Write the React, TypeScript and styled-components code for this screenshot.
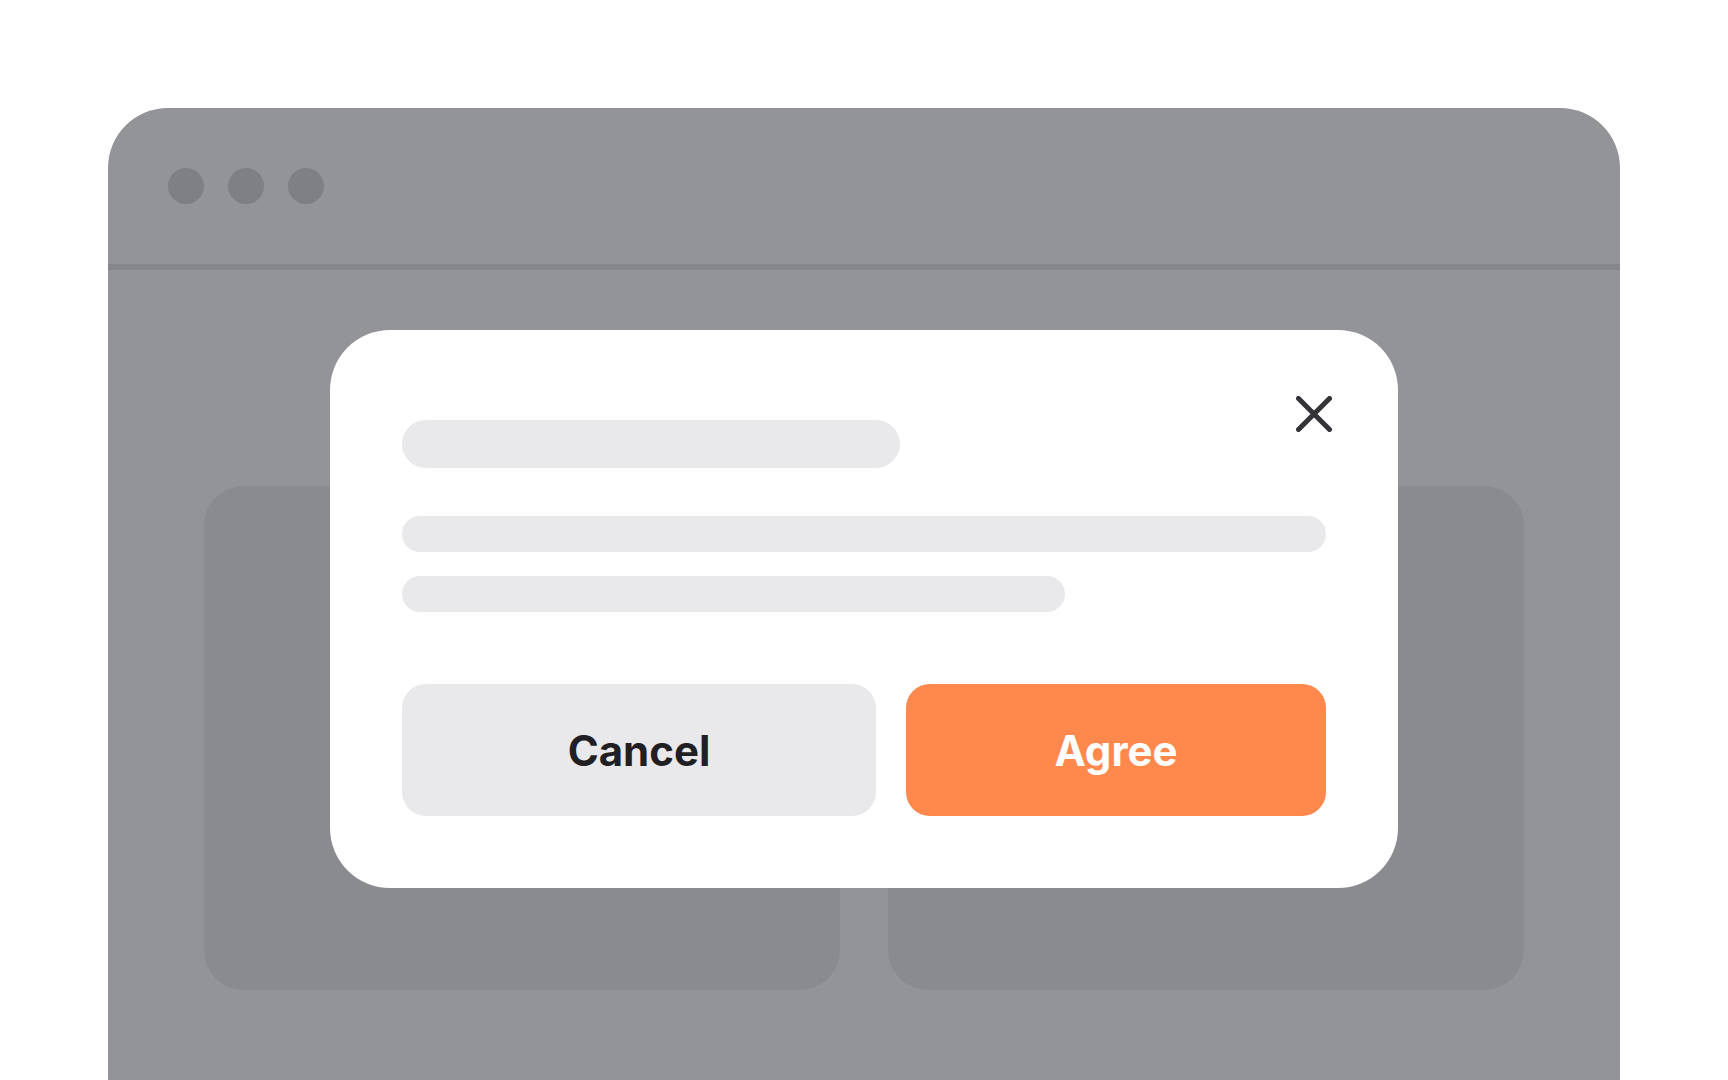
import React from "react";
import styled, { createGlobalStyle } from "styled-components";

const GlobalStyle = createGlobalStyle`
  html, body {
    margin: 0;
    padding: 0;
    background: #ffffff;
    overflow: hidden;
    font-family: Inter, "Liberation Sans", sans-serif;
  }
`;

const Page = styled.div`
  width: 1728px;
  height: 1080px;
  padding: 108px 108px 0;
  box-sizing: border-box;
  overflow: hidden;
`;

const BrowserWindow = styled.div`
  position: relative;
  height: 1002px;
  background: #939498;
  border-radius: 60px 60px 0 0;
  display: flex;
  flex-direction: column;
`;

const TitleBar = styled.div`
  height: 156px;
  padding-left: 60px;
  display: flex;
  align-items: center;
  gap: 24px;
  border-bottom: 6px solid #86878b;
`;

const Dot = styled.span`
  width: 36px;
  height: 36px;
  border-radius: 50%;
  background: #7f8085;
`;

const WindowBody = styled.div`
  padding: 216px 96px 0;
  display: grid;
  grid-template-columns: 1fr 1fr;
  gap: 48px;
`;

const Card = styled.div`
  height: 504px;
  border-radius: 40px;
  background: #8a8b8f;
`;

// overlay layer that centers the dialog over the window
const Overlay = styled.div`
  position: absolute;
  inset: 0;
  display: flex;
  align-items: center;
  justify-content: center;
`;

const Modal = styled.div`
  position: relative;
  width: 1068px;
  box-sizing: border-box;
  padding: 90px 72px 72px;
  background: #ffffff;
  border-radius: 60px;
  display: flex;
  flex-direction: column;
`;

const CloseButton = styled.button`
  position: absolute;
  top: 66px;
  right: 66px;
  width: 36px;
  height: 36px;
  padding: 0;
  border: none;
  background: none;
  cursor: pointer;
  display: flex;
`;

const Skeleton = styled.div<{ w: number; h: number }>`
  width: ${p => p.w}px;
  height: ${p => p.h}px;
  border-radius: ${p => p.h / 2}px;
  background: #e9e9eb;
`;

const Lines = styled.div`
  display: flex;
  flex-direction: column;
  gap: 24px;
  margin-top: 48px;
`;

const Actions = styled.div`
  margin-top: 72px;
  display: flex;
  gap: 30px;
`;

const ActionButton = styled.button<{ primary?: boolean; w: number }>`
  width: ${p => p.w}px;
  height: 132px;
  border: none;
  border-radius: 24px;
  background: ${p => (p.primary ? "#ff884d" : "#e9e9eb")};
  color: ${p => (p.primary ? "#ffffff" : "#1f1f24")};
  font-family: Inter, "Liberation Sans", sans-serif;
  font-weight: 700;
  font-size: 42px;
  cursor: pointer;
`;

const CloseIcon = () => (
  <svg width="36" height="36" viewBox="0 0 36 36" fill="none">
    <path d="M2.5 2.5L33.5 33.5M33.5 2.5L2.5 33.5" stroke="#333338" strokeWidth="5" strokeLinecap="round" />
  </svg>
);

const App: React.FC = () => {
  return (
    <>
      <GlobalStyle />
      <Page>
        <BrowserWindow>
          <TitleBar>
            <Dot />
            <Dot />
            <Dot />
          </TitleBar>
          <WindowBody>
            <Card />
            <Card />
          </WindowBody>

          <Overlay>
            <Modal>
              <CloseButton aria-label="Close">
                <CloseIcon />
              </CloseButton>
              <Skeleton w={498} h={48} />
              <Lines>
                <Skeleton w={924} h={36} />
                <Skeleton w={663} h={36} />
              </Lines>
              <Actions>
                <ActionButton w={474}>Cancel</ActionButton>
                <ActionButton w={420} primary>Agree</ActionButton>
              </Actions>
            </Modal>
          </Overlay>
        </BrowserWindow>
      </Page>
    </>
  );
};

export default App;
